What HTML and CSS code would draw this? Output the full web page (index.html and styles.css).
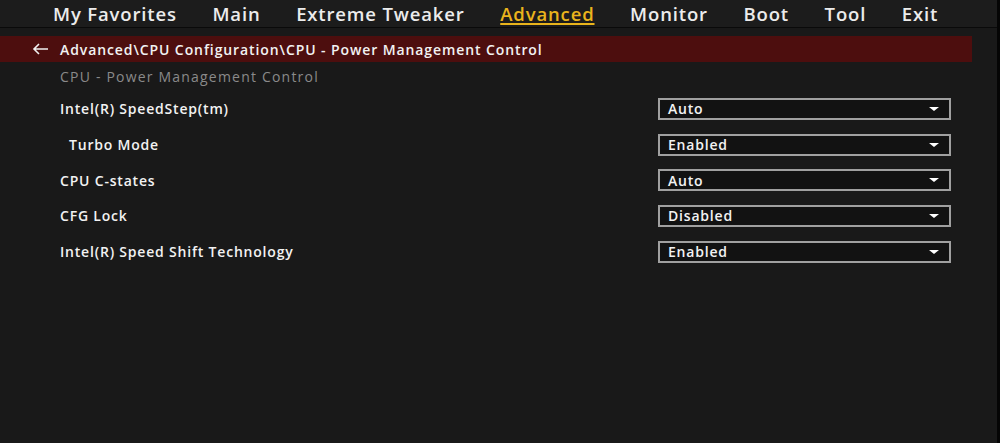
FILE: index.html
```html
<!DOCTYPE html>
<html lang="en">
<head>
    <meta charset="UTF-8">
    <meta name="viewport" content="width=device-width, initial-scale=1.0">
    <title>Advanced - CPU Power Management Control</title>
    <link rel="stylesheet" href="styles.css">
</head>
<body>
    <header class="tabs">
        <span class="tab">My Favorites</span>
        <span class="tab">Main</span>
        <span class="tab">Extreme Tweaker</span>
        <span class="tab active">Advanced</span>
        <span class="tab">Monitor</span>
        <span class="tab">Boot</span>
        <span class="tab">Tool</span>
        <span class="tab">Exit</span>
    </header>

    <div class="crumb">
        <svg class="back" width="17" height="12" viewBox="0 0 17 12">
            <path d="M16 6H2M7 1L2 6l5 5" fill="none" stroke="#f0f0f0" stroke-width="1.6"/>
        </svg>
        <span>Advanced\CPU Configuration\CPU - Power Management Control</span>
    </div>

    <main class="settings">
        <div class="section">CPU - Power Management Control</div>

        <div class="row">
            <span class="label">Intel(R) SpeedStep(tm)</span>
            <div class="select"><span>Auto</span><i class="caret"></i></div>
        </div>
        <div class="row">
            <span class="label sub">Turbo Mode</span>
            <div class="select"><span>Enabled</span><i class="caret"></i></div>
        </div>
        <div class="row">
            <span class="label">CPU C-states</span>
            <div class="select"><span>Auto</span><i class="caret"></i></div>
        </div>
        <div class="row">
            <span class="label">CFG Lock</span>
            <div class="select"><span>Disabled</span><i class="caret"></i></div>
        </div>
        <div class="row">
            <span class="label">Intel(R) Speed Shift Technology</span>
            <div class="select"><span>Enabled</span><i class="caret"></i></div>
        </div>
    </main>
</body>
</html>
```

FILE: styles.css
```css
html, body {
    margin: 0;
    height: 100%;
}
body {
    font-family: "Open Sans", "Noto Sans", sans-serif;
    background-color: #191919;
    color: #f2f2f2;
    border-right: 3px solid #050505;
    box-sizing: border-box;
    overflow: hidden;
}
.tabs {
    display: flex;
    gap: 35.6px;
    height: 27px;
    padding-left: 53px;
    background-color: #1c1c1c;
    border-bottom: 1px solid #0a0a0a;
    font-size: 18.5px;
    font-weight: 600;
    letter-spacing: 0.85px;
    line-height: 27px;
}
.tab {
    color: #ececec;
}
.tab.active {
    color: #e9b41c;
    text-decoration: underline;
    text-underline-offset: 2px;
    text-decoration-thickness: 2px;
}
.crumb {
    display: flex;
    align-items: center;
    width: 972px;
    height: 26px;
    margin-top: 8px;
    background-color: #4d0e0e;
    font-size: 14px;
    font-weight: 600;
    letter-spacing: 0.9px;
}
.back {
    margin-left: 32px;
    margin-right: 11px;
}
.settings {
    padding-left: 60px;
}
.section {
    color: #8a8a8a;
    font-size: 14px;
    letter-spacing: 1.2px;
    line-height: 28px;
    margin-top: 1px;
}
.row {
    display: flex;
    align-items: center;
    height: 35.7px;
    font-size: 14px;
    font-weight: 600;
    letter-spacing: 0.8px;
}
.label {
    width: 598px;
}
.label.sub {
    padding-left: 9px;
    width: 589px;
}
.select {
    display: flex;
    align-items: center;
    justify-content: space-between;
    width: 293px;
    height: 22px;
    box-sizing: border-box;
    border: 2px solid #a0a0a0;
    padding: 0 10px 0 8px;
    background-color: #121212;
}
.caret {
    width: 0;
    height: 0;
    border-left: 5px solid transparent;
    border-right: 5px solid transparent;
    border-top: 4px solid #ffffff;
}
```
